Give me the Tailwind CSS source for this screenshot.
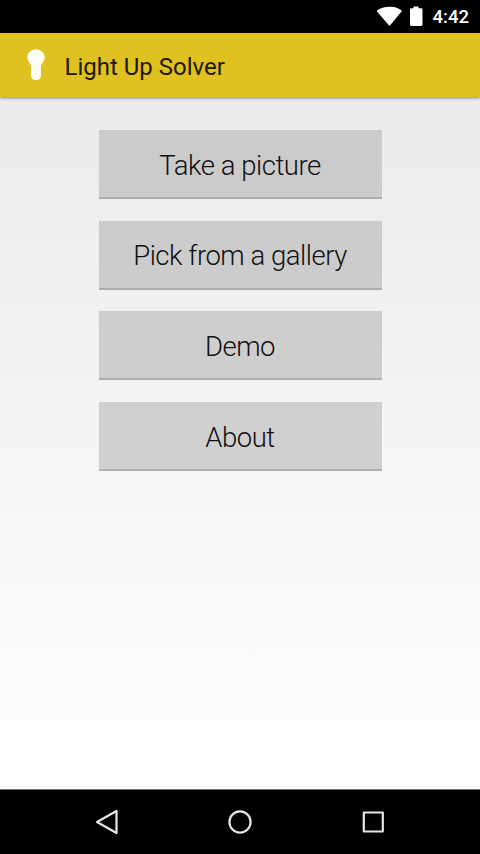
<!DOCTYPE html>
<html lang="en">
<head>
<meta charset="utf-8">
<title>Light Up Solver</title>
<script src="https://cdn.jsdelivr.net/npm/@tailwindcss/browser@4"></script>
</head>
<body class="flex h-[854px] w-[480px] flex-col overflow-hidden bg-black font-['Roboto',sans-serif]">
  <div class="flex h-[33px] shrink-0 items-center justify-end pr-[11px] text-white">
    <svg class="h-[33px] w-[56px]" viewBox="0 0 56 33" fill="#fff">
      <path d="M-.5 11C5 5.300 20 5.300 25 11L12.500 26Z"/>
      <path d="M36.500 6.500h5v1.800h2.700q1.300 0 1.300 1.300v15q0 1.300-1.300 1.300H34.300q-1.300 0-1.300-1.300v-15q0-1.300 1.300-1.300H36.500Z"/>
    </svg>
    <span class="pt-[2px] text-[18.500px] leading-none font-medium">4:42</span>
  </div>
  <header class="z-10 flex h-[64px] shrink-0 items-center bg-[#dfc11f] pl-[26px] shadow-[0_1px_3px_rgba(0,0,0,0.45)]">
    <svg class="h-[32px] w-[20px]" viewBox="0 0 20 32" fill="#fffef4">
      <path d="M10 .2C5 .2 1.300 3.900 1.300 8.500c0 4 3.700 5.500 3.700 9.500v8.500c0 2.800 2 4.700 5 4.700s5-1.900 5-4.700V18c0-4 3.700-5.500 3.700-9.500C18.700 3.900 15 .2 10 .2Z"/>
      <path d="M6.500 18.800q3.500-1.500 7 0" fill="none" stroke="#f0e8c0" stroke-width=".6"/>
    </svg>
    <h1 class="ml-[18.500px] pt-[3px] text-[24px] leading-none whitespace-nowrap text-[#211800]">Light Up Solver</h1>
  </header>
  <main class="flex h-[693px] shrink-0 flex-col items-center gap-[21.700px] border-b border-[#777] bg-linear-to-b from-[#ebebeb] to-white pt-[33px] text-[27.500px] leading-none font-light tracking-[-0.480px] text-[#111]">
    <button class="h-[69px] w-[283px] shrink-0 border-b-2 border-[#acacac] bg-[#cbcbcb] pt-[4px]">Take a picture</button>
    <button class="h-[69px] w-[283px] shrink-0 border-b-2 border-[#acacac] bg-[#cccccc] pt-[4px]">Pick from a gallery</button>
    <button class="h-[69px] w-[283px] shrink-0 border-b-2 border-[#afafaf] bg-[#cecece] pt-[4px]">Demo</button>
    <button class="h-[69px] w-[283px] shrink-0 border-b-2 border-[#b0b0b0] bg-[#d0d0d0] pt-[4px]">About</button>
  </main>
  <nav class="flex h-[64px] shrink-0 items-center justify-between pr-[94px] pl-[94px]">
    <svg class="size-[26px]" viewBox="0 0 26 26" fill="none" stroke="#e6e6e6" stroke-width="2.200" stroke-linejoin="round"><path d="M3 13 22.500 2v22Z"/></svg>
    <svg class="size-[26px]" viewBox="0 0 26 26" fill="none" stroke="#e6e6e6" stroke-width="2.200"><circle cx="13" cy="13" r="10.600"/></svg>
    <svg class="size-[26px]" viewBox="0 0 26 26" fill="none" stroke="#e6e6e6" stroke-width="2.200" stroke-linejoin="round"><path d="M3.800 3.500h19v19h-19Z"/></svg>
  </nav>
</body>
</html>
